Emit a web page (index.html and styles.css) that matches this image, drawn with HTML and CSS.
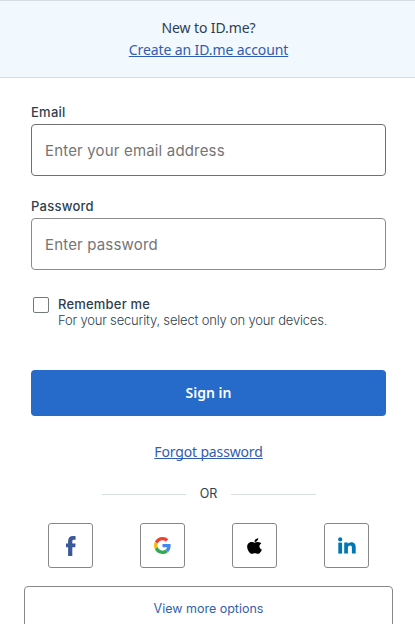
FILE: index.html
```html
<!DOCTYPE html>
<html lang="en">
<head>
    <meta charset="UTF-8">
    <meta name="viewport" content="width=device-width, initial-scale=1.0">
    <title>Sign in - ID.me</title>
    <link rel="stylesheet" href="styles.css">
</head>
<body>
    <header class="signup-banner">
        <p>New to ID.me?</p>
        <a href="#">Create an ID.me account</a>
    </header>

    <main class="signin">
        <form class="signin-form">
            <label class="field-label" for="email">Email</label>
            <input class="field-input" type="email" id="email" placeholder="Enter your email address">

            <label class="field-label" for="password">Password</label>
            <input class="field-input password" type="password" id="password" placeholder="Enter password">

            <div class="remember">
                <input type="checkbox" id="remember">
                <label for="remember">
                    <span class="remember-title">Remember me</span>
                    <span class="remember-note">For your security, select only on your devices.</span>
                </label>
            </div>

            <button class="btn-signin" type="button">Sign in</button>
        </form>

        <a class="forgot" href="#">Forgot password</a>

        <div class="divider"><span>OR</span></div>

        <div class="social">
            <a href="#" aria-label="Facebook">
                <svg width="10" height="20" viewBox="0 0 10 20">
                    <path fill="#3b5998" d="M2.1 20V11.200H0V7.400h2.100V5.200C2.100 1.700 3.900 0 7 0c1 0 1.900.1 2.600.2v3.500H8c-1.300 0-1.700.6-1.700 1.600v2.100h3.300l-.4 3.800H6.300V20z"/>
                </svg>
            </a>
            <a href="#" aria-label="Google">
                <svg width="17" height="17" viewBox="0 0 48 48">
                    <path fill="#ea4335" d="M24 9.5c3.54 0 6.71 1.22 9.21 3.6l6.85-6.85C35.9 2.38 30.47 0 24 0 14.62 0 6.51 5.38 2.56 13.22l7.98 6.19C12.43 13.72 17.74 9.5 24 9.5z"/>
                    <path fill="#4285f4" d="M46.98 24.55c0-1.57-.15-3.09-.38-4.55H24v9.02h12.94c-.58 2.96-2.26 5.48-4.78 7.18l7.73 6c4.51-4.18 7.09-10.36 7.09-17.65z"/>
                    <path fill="#fbbc05" d="M10.53 28.59c-.48-1.45-.76-2.99-.76-4.59s.27-3.14.76-4.59l-7.98-6.19C.92 16.46 0 20.12 0 24c0 3.88.92 7.54 2.56 10.78l7.97-6.19z"/>
                    <path fill="#34a853" d="M24 48c6.48 0 11.93-2.13 15.89-5.81l-7.73-6c-2.15 1.45-4.92 2.3-8.16 2.3-6.26 0-11.57-4.22-13.47-9.91l-7.98 6.19C6.51 42.62 14.62 48 24 48z"/>
                </svg>
            </a>
            <a href="#" aria-label="Apple">
                <svg width="15" height="18" viewBox="0 0 384 512" preserveAspectRatio="none">
                    <path d="M318.7 268.700c-.2-36.700 16.400-64.400 50-84.800-18.800-26.900-47.200-41.700-84.700-44.600-35.500-2.800-74.300 20.700-88.500 20.700-15 0-49.400-19.700-76.400-19.700C63.300 141.200 4 184.800 4 273.500q0 39.300 14.400 81.200c12.800 36.700 59 126.700 107.200 125.200 25.200-.6 43-17.900 75.800-17.900 31.800 0 48.300 17.900 76.400 17.900 48.600-.7 90.400-82.500 102.600-119.300-65.200-30.700-61.700-90-61.700-91.900zM262.100 104.500c27.300-32.400 24.800-61.900 24-72.500-24.100 1.400-52 16.400-67.900 34.900-17.500 19.800-27.800 44.300-25.600 71.900 26.100 2 49.900-11.400 69.500-34.300z"/>
                </svg>
            </a>
            <a href="#" aria-label="LinkedIn">
                <svg width="18" height="17" viewBox="0 0 18 17">
                    <g fill="#0077b5">
                        <circle cx="2.200" cy="2.400" r="2.100"/>
                        <rect x=".3" y="5.600" width="3.800" height="11"/>
                        <path d="M6.200 5.600h3.600v1.500c.6-1 1.700-1.800 3.400-1.800 3.500 0 4.500 2.200 4.500 5.200v6.100h-3.800v-5.400c0-1.400-.1-2.800-1.800-2.800s-2.200 1.400-2.200 2.700v5.500H6.200z"/>
                    </g>
                </svg>
            </a>
        </div>

        <button class="btn-more" type="button">View more options</button>
    </main>
</body>
</html>
```
FILE: styles.css
```css
* {
    box-sizing: border-box;
}
body {
    margin: 0;
    height: 624px;
    overflow: hidden;
    background-color: #fff;
    color: #2e3f51;
    font-family: Inter, sans-serif;
}
.signup-banner {
    height: 78px;
    padding: 16px 0 0 2px;
    border-top: 1px solid #d5dde2;
    border-bottom: 1px solid #d5dde2;
    background-color: #f1f8fe;
    font-family: "Noto Sans", sans-serif;
    font-size: 14px;
    letter-spacing: -0.1px;
    line-height: 22px;
    text-align: center;
}
.signup-banner p {
    margin: 0;
}
.signup-banner a, .forgot {
    color: #325cb0;
    text-underline-offset: 1px;
    text-decoration-skip-ink: none;
}
.signin {
    display: flex;
    flex-direction: column;
    align-items: center;
    padding: 26px 29px 0 31px;
}
.signin-form {
    width: 100%;
}
.field-label {
    display: block;
    height: 20px;
    font-size: 13px;
    font-weight: 500;
    letter-spacing: 0.25px;
    line-height: 17px;
}
.field-input {
    display: block;
    width: 100%;
    height: 52px;
    margin: 0 0 22px;
    padding: 0 13px;
    border: 1px solid #6c7073;
    border-radius: 4px;
    font-family: Inter, sans-serif;
    font-size: 15px;
    letter-spacing: 0.17px;
}
.field-input.password {
    border-color: #898c8f;
}
.field-input::placeholder {
    color: #757575;
}
.remember {
    display: flex;
    height: 78px;
    margin-top: 26px;
    padding-left: 2px;
}
.remember input {
    appearance: none;
    width: 16px;
    height: 16px;
    margin: 1px 9px 0 0;
    border: 1px solid #74797d;
    border-radius: 2px;
}
.remember span {
    display: block;
    font-size: 13px;
    line-height: 16px;
    white-space: nowrap;
}
.remember .remember-title {
    font-weight: 500;
    letter-spacing: 0.2px;
}
.remember .remember-note {
    font-weight: 300;
    letter-spacing: -0.19px;
}
.btn-signin {
    display: block;
    width: 100%;
    height: 46px;
    margin-top: -4px;
    padding: 0 0 2px;
    border: none;
    border-radius: 4px;
    background-color: #266aca;
    color: #fff;
    font-family: "Noto Sans", sans-serif;
    font-size: 14px;
    font-weight: 600;
}
.forgot {
    margin-top: 25px;
    font-family: "Noto Sans", sans-serif;
    font-size: 14px;
    letter-spacing: -0.15px;
    line-height: 22px;
}
.divider {
    display: flex;
    align-items: center;
    gap: 14px;
    width: 214px;
    margin-top: 20px;
    font-size: 12.5px;
    line-height: 20px;
}
.divider::before, .divider::after {
    content: "";
    flex: 1;
    height: 1px;
    margin-top: 1px;
    background-color: #d9dee2;
}
.divider span {
    padding-top: 1px;
}
.social {
    display: flex;
    justify-content: space-between;
    width: 321px;
    margin-top: 19px;
}
.social a {
    display: flex;
    align-items: center;
    justify-content: center;
    width: 45px;
    height: 45px;
    border: 1px solid #85888b;
    border-radius: 3px;
}
.btn-more {
    width: 369px;
    height: 46px;
    margin-top: 18px;
    padding: 0 0 1px;
    border: 1px solid #85898b;
    border-radius: 4px;
    background-color: #fff;
    color: #355fac;
    font-family: Inter, sans-serif;
    font-size: 12.5px;
}
```
